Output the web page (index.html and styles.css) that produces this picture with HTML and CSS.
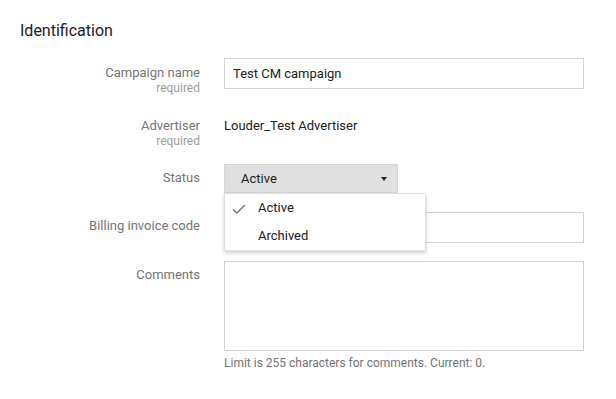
FILE: index.html
```html
<!DOCTYPE html>
<html lang="en">
<head>
    <meta charset="UTF-8">
    <meta name="viewport" content="width=device-width, initial-scale=1.0">
    <title>Campaign properties</title>
    <link rel="stylesheet" href="styles.css">
</head>
<body>
    <div class="container">
        <h2 class="section-title">Identification</h2>
        <div class="form-grid">
            <div class="label">Campaign name<span class="required">required</span></div>
            <div class="control"><input type="text" class="text-input" value="Test CM campaign"></div>

            <div class="label label-plain">Advertiser<span class="required">required</span></div>
            <div class="control"><div class="static-value">Louder_Test Advertiser</div></div>

            <div class="label label-select">Status</div>
            <div class="control select-wrap">
                <div class="select">
                    <span>Active</span>
                    <span class="arrow"></span>
                </div>
                <div class="menu">
                    <div class="menu-item selected">
                        <svg class="check" width="14" height="10" viewBox="0 0 14 10"><path d="M1 5.5 L4.8 9 L13 1" fill="none" stroke="#757575" stroke-width="1.3"/></svg>
                        Active
                    </div>
                    <div class="menu-item">Archived</div>
                </div>
            </div>

            <div class="label label-select">Billing invoice code</div>
            <div class="control"><input type="text" class="text-input"></div>

            <div class="label label-select">Comments</div>
            <div class="control">
                <textarea class="text-area"></textarea>
                <p class="hint">Limit is 255 characters for comments. Current: 0.</p>
            </div>
        </div>
    </div>
</body>
</html>
```

FILE: styles.css
```css
body {
    margin: 0;
    font-family: Roboto, "Liberation Sans", sans-serif;
    background-color: #fff;
    color: #212121;
}

.container {
    padding: 20px 20px 0 20px;
}

.section-title {
    margin: 0 0 16px 0;
    font-size: 16px;
    font-weight: 400;
    line-height: 22px;
    color: #212121;
}

.form-grid {
    display: grid;
    grid-template-columns: 180px 360px;
    grid-template-rows: 58px 48px 48px 49px auto;
    column-gap: 24px;
}

.label {
    text-align: right;
    font-size: 13px;
    line-height: 16px;
    color: #757575;
    padding-top: 7px;
}

.label-plain {
    padding-top: 2px;
}

.label-select {
    padding-top: 6px;
}

.required {
    display: block;
    font-size: 12px;
    line-height: 14px;
    color: #9e9e9e;
}

.control {
    position: relative;
}

.text-input {
    box-sizing: border-box;
    width: 360px;
    height: 31px;
    border: 1px solid #d4d4d4;
    padding: 0 8px;
    font-family: inherit;
    font-size: 13px;
    color: #212121;
    outline: none;
}

.static-value {
    font-size: 13px;
    line-height: 20px;
}

.select {
    box-sizing: border-box;
    width: 174px;
    height: 29px;
    background-color: #e0e0e0;
    border: 1px solid #d6d6d6;
    display: flex;
    align-items: center;
    justify-content: space-between;
    padding: 0 10px 0 16px;
    font-size: 13px;
}

.arrow {
    width: 0;
    height: 0;
    border-left: 3.5px solid transparent;
    border-right: 3.5px solid transparent;
    border-top: 4px solid #212121;
}

.menu {
    position: absolute;
    top: 29px;
    left: 0;
    width: 202px;
    box-sizing: border-box;
    padding: 0;
    background-color: #fff;
    border: 1px solid #e0e0e0;
    box-shadow: 0 2px 4px rgba(0, 0, 0, 0.2);
    z-index: 2;
}

.menu-item {
    position: relative;
    height: 28px;
    line-height: 28px;
    padding-left: 33px;
    font-size: 13px;
    color: #212121;
}

.check {
    position: absolute;
    left: 7px;
    top: 10px;
}

.text-area {
    display: block;
    box-sizing: border-box;
    width: 360px;
    height: 90px;
    border: 1px solid #d4d4d4;
    resize: none;
    outline: none;
    font-family: inherit;
}

.hint {
    margin: 4px 0 0 0;
    font-size: 12px;
    line-height: 16px;
    color: #757575;
}
```
